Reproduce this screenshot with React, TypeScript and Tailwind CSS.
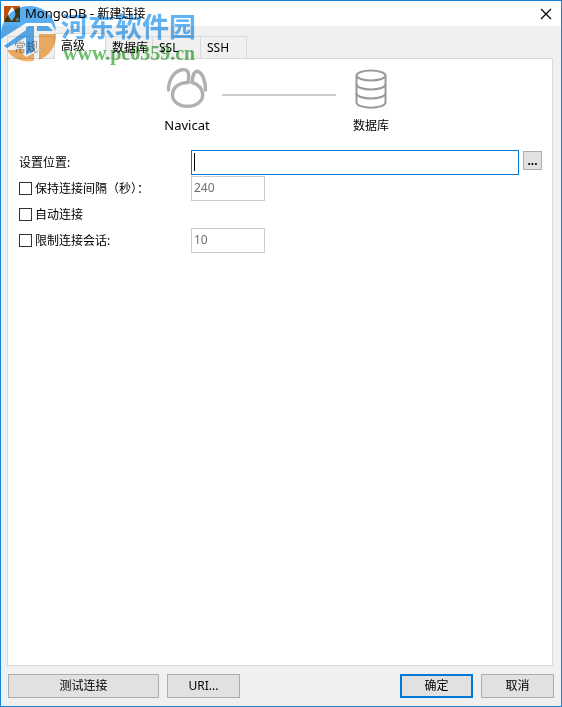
import { useState } from "react";
import type { ReactNode } from "react";

const TABS = [
  { id: "general", label: "常规", width: "w-12", muted: true },
  { id: "advanced", label: "高级", width: "w-[52px]", muted: false },
  { id: "database", label: "数据库", width: "w-12", muted: false },
  { id: "ssl", label: "SSL", width: "w-[49px]", muted: false },
  { id: "ssh", label: "SSH", width: "w-[47px]", muted: false },
];

function AppIcon() {
  return (
    <svg width="16" height="16" viewBox="0 0 16 16" aria-hidden="true">
      <rect width="16" height="16" rx="1" fill="#b9510f" />
      <path d="M8 1C11 4 12 7 11 10C10 12 9 13 8 15C6 13 5 12 4 9C4 6 6 4 8 1Z" fill="#fff" />
      <circle cx="13.5" cy="13.5" r="2" fill="#e8a581" />
    </svg>
  );
}

function NavicatIcon() {
  return (
    <svg width="42" height="42" viewBox="0 0 42 42" fill="none" stroke="#b0b0b0" strokeWidth="3.4" strokeLinejoin="round" strokeLinecap="round" aria-hidden="true">
      <path d="M2.5 23C2.5 13 8 4 16 2.7C22 2 23.8 5 22 15.5" />
      <path d="M26 15.5C26.5 9 28.5 4.2 31.2 4.2C36 5 39.8 14 39.5 23" />
      <path d="M22 15.5C13 15.5 6.5 20.5 6.5 28C6.5 34.5 13 39.3 21.6 39.3C30 39.3 36.7 34.5 36.7 28C36.7 22 32.5 17 26 15.5" />
    </svg>
  );
}

function DatabaseIcon() {
  return (
    <svg width="32" height="40" viewBox="0 0 32 40" fill="none" stroke="#999" strokeWidth="2" aria-hidden="true">
      <ellipse cx="16" cy="6.5" rx="14.5" ry="5" />
      <path d="M1.5 6.5V33.5C1.5 36.3 8 38.7 16 38.7S30.5 36.3 30.5 33.5V6.5" />
      <path d="M1.5 15.5C1.5 18.3 8 20.5 16 20.5S30.5 18.3 30.5 15.5" />
      <path d="M1.5 24.5C1.5 27.3 8 29.5 16 29.5S30.5 27.3 30.5 24.5" />
    </svg>
  );
}

function Watermark() {
  return (
    <div className="pointer-events-none absolute left-0 top-1 z-20 flex mix-blend-multiply">
      <svg width="60" height="58" viewBox="0 0 60 58" aria-hidden="true">
        <path d="M0 33C-1 14 12 1 28 1C43 1 54 11 55 26L50 18H25L0 34Z" fill="#58aef0" />
        <path d="M3 41L25 25V22L28 21H33V46L25 50V32L6 43Z" fill="#58aef0" />
        <path d="M36 21H47L52 26H36Z" fill="#58aef0" />
        <path d="M38 29H55C56 41 48 51 38 55Z" fill="#f8b366" />
        <path d="M6 45H22V49L25 52L33 48V56C20 58 11 53 6 45Z" fill="#f8b366" />
      </svg>
      <div className="whitespace-nowrap pt-1.5">
        <div className="font-['Noto_Sans_CJK_SC',sans-serif] text-[27px] leading-[30px] font-bold text-[#61b3f3]">河东软件园</div>
        <div className="pl-0.5 pt-0.5 font-['Liberation_Serif',serif] text-[20px] leading-5 font-bold text-[#6cbd69]">www.pc0359.cn</div>
      </div>
    </div>
  );
}

function PushButton({ className, primary, children }: { className: string; primary?: boolean; children: ReactNode }) {
  return (
    <button
      type="button"
      className={`h-6 bg-[#e1e1e1] leading-5 ${primary ? "border-2 border-[#0078d7]" : "border border-[#adadad]"} ${className}`}
    >
      {children}
    </button>
  );
}

interface OptionProps {
  id: string;
  label: string;
  checked: boolean;
  onToggle: () => void;
  value?: string;
}

function OptionRow({ id, label, checked, onToggle, value }: OptionProps) {
  return (
    <div className="mb-px flex h-[25px] items-center">
      <div className="flex w-[172px] shrink-0 items-center gap-[3px]">
        <input
          id={id}
          type="checkbox"
          checked={checked}
          onChange={onToggle}
          className="size-[13px] appearance-none border border-[#333] bg-white checked:bg-[#0078d7]"
        />
        <label htmlFor={id} className="whitespace-nowrap">{label}</label>
      </div>
      {value !== undefined && (
        <input
          type="text"
          aria-label={label}
          defaultValue={value}
          disabled={!checked}
          className="h-[25px] w-[74px] border border-[#ccc] bg-white px-0.5 pb-0.5 text-[#6d6d6d]"
        />
      )}
    </div>
  );
}

export default function App() {
  const [tab, setTab] = useState("advanced");
  const [location, setLocation] = useState("");
  const [checks, setChecks] = useState({ keepAlive: false, autoConnect: false, limit: false });

  const toggle = (key: keyof typeof checks) => setChecks(c => ({ ...c, [key]: !c[key] }));

  return (
    <div className="relative flex min-h-screen flex-col border border-[#1883d7] bg-[#f0f0f0] font-['Noto_Sans','Noto_Sans_CJK_SC',sans-serif] text-[12px] leading-4 text-black">
      <header className="flex h-[25px] items-center bg-white pl-[3px] pr-2">
        <AppIcon />
        <h1 className="ml-[5px] flex-1 text-[13px]">
          MongoDB - <span className="text-[12px]">新建连接</span>
        </h1>
        <button type="button" aria-label="关闭" className="flex size-3.5 items-center justify-center">
          <svg width="12" height="12" viewBox="0 0 12 12" stroke="#000" strokeWidth="1.2" aria-hidden="true">
            <path d="M1 1L11 11M11 1L1 11" />
          </svg>
        </button>
      </header>

      <div role="tablist" className="flex items-end pl-1.5 pt-[7px]">
        {TABS.map(t => (
          <button
            key={t.id}
            type="button"
            role="tab"
            aria-selected={t.id === tab}
            onClick={() => setTab(t.id)}
            className={`-mr-px border border-b-0 border-[#d9d9d9] pl-1.5 text-left whitespace-nowrap ${t.width} ${
              t.id === tab ? "z-10 -mb-px h-[26px] bg-white pb-0.5" : "h-[22px] bg-[#f0f0f0]"
            } ${t.muted ? "text-[#888]" : ""}`}
          >
            {t.label}
          </button>
        ))}
      </div>

      <main className="ml-1.5 mr-2 flex-1 border border-[#d9d9d9] bg-white pl-[11px] pr-2.5 pt-2">
        <div className="flex pl-[138px]">
          <div className="flex w-[60px] flex-col items-center">
            <NavicatIcon />
            <span className="mt-2 text-[13px]">Navicat</span>
          </div>
          <div className="mx-[5px] mt-[27px] h-0.5 w-[114px] bg-[#ccc]" />
          <div className="flex w-[60px] flex-col items-center pt-0.5">
            <DatabaseIcon />
            <span className="mt-[9px]">数据库</span>
          </div>
        </div>

        <form className="mt-4" onSubmit={e => e.preventDefault()}>
          <div className="flex h-[26px] items-start">
            <label htmlFor="location" className="w-[172px] shrink-0 leading-[25px]">设置位置:</label>
            <div className="relative flex-1">
              <input
                id="location"
                type="text"
                value={location}
                onChange={e => setLocation(e.target.value)}
                className="peer block h-[25px] w-full border border-[#0078d7] bg-white px-0.5 outline-none"
              />
              <span className="absolute left-[3px] top-[3px] h-[18px] w-px bg-black peer-focus:hidden" />
            </div>
            <button type="button" aria-label="浏览" className="ml-1 mt-px h-[19px] w-[19px] border border-[#adadad] bg-[#e1e1e1] font-bold leading-4">
              ...
            </button>
          </div>
          <OptionRow id="keepAlive" label="保持连接间隔（秒）：" value="240" checked={checks.keepAlive} onToggle={() => toggle("keepAlive")} />
          <OptionRow id="autoConnect" label="自动连接" checked={checks.autoConnect} onToggle={() => toggle("autoConnect")} />
          <OptionRow id="limit" label="限制连接会话:" value="10" checked={checks.limit} onToggle={() => toggle("limit")} />
        </form>
      </main>

      <footer className="flex gap-2 px-[7px] py-2">
        <PushButton className="w-[151px]">测试连接</PushButton>
        <PushButton className="w-[73px]">URI...</PushButton>
        <PushButton className="ml-auto w-[73px]" primary>确定</PushButton>
        <PushButton className="w-[73px]">取消</PushButton>
      </footer>

      <Watermark />
    </div>
  );
}
